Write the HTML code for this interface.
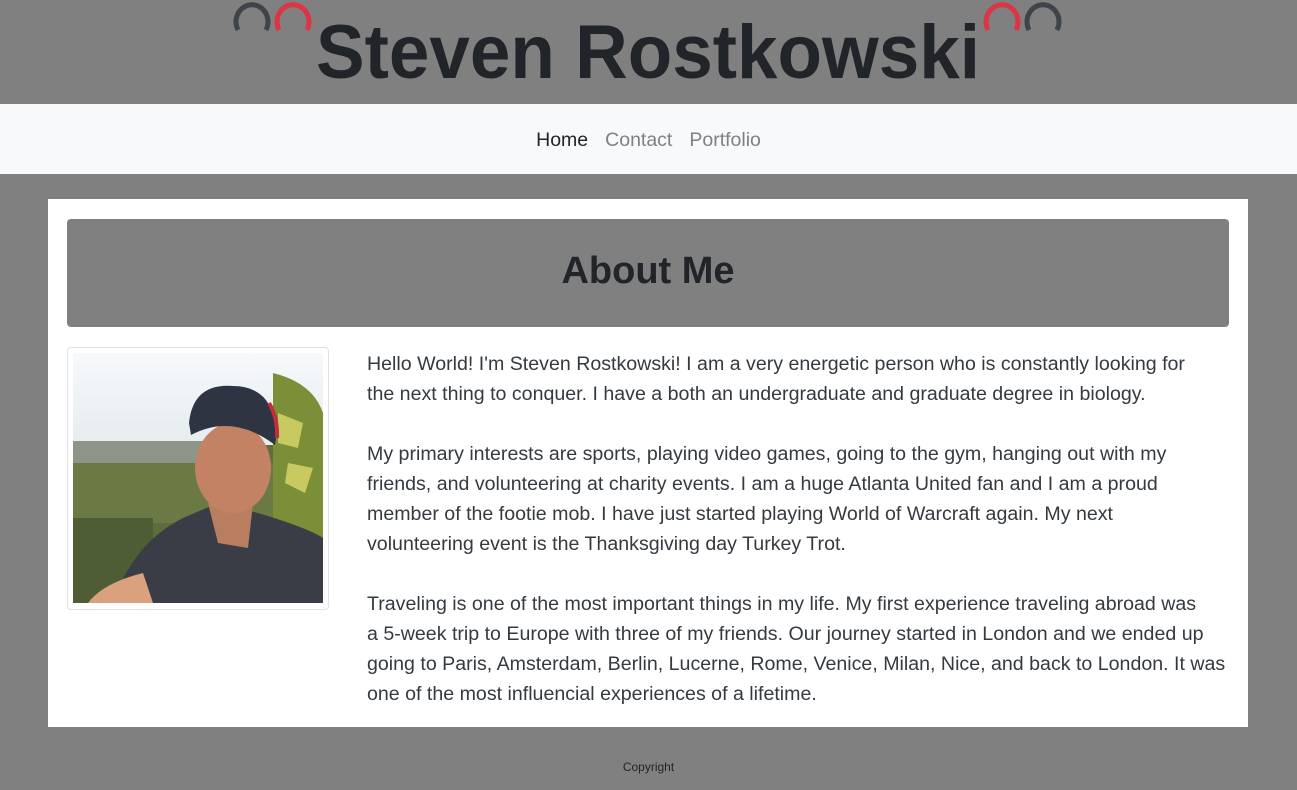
<!DOCTYPE html>
<html><head><meta charset="utf-8"><style>
*{margin:0;padding:0;box-sizing:border-box}
body{width:1297px;height:790px;background:#808080;font-family:"Liberation Sans",sans-serif;overflow:hidden;position:relative}
.hdr{position:absolute;left:0;top:0;width:1297px;height:104px}
.nav{position:absolute;top:104px;left:0;width:1297px;height:70px;background:#f8f9fa;text-align:center;font-size:19.5px;line-height:72px;color:#808080}
.nav span{margin:0 8.5px}
.main{position:absolute;left:48px;top:199px;width:1200px;height:528px;background:#fff}
.about{position:absolute;left:19px;top:20px;width:1162px;height:108px;background:#808080;border-radius:4px;text-align:center;font-size:38px;font-weight:bold;line-height:104px;color:#212529}
.pic{position:absolute;left:19px;top:148px;width:262px;height:263px;border:1px solid #dee2e6;border-radius:4px;background:#fff;padding:5px}
.txt{position:absolute;left:319px;top:150px;font-size:19.6px;line-height:30px;color:#343a40;white-space:nowrap}
.txt p{margin-bottom:30px}
.foot{position:absolute;top:760px;width:1297px;text-align:center;font-size:12px;color:#212529}
</style></head><body>
<svg class="hdr" width="1297" height="104">
<g fill="none" stroke-width="5">
<path d="M238 30 A16 17 0 1 1 266 30" stroke="#3f444a"/>
<path d="M279 30 A16 17 0 1 1 307 30" stroke="#dc3545"/>
<path d="M988 30 A16 17 0 1 1 1016 30" stroke="#dc3545"/>
<path d="M1029 30 A16 17 0 1 1 1057 30" stroke="#3f444a"/>
</g>
<text x="316" y="78" font-size="76" font-weight="bold" fill="#212529" textLength="664" lengthAdjust="spacingAndGlyphs" font-family="Liberation Sans">Steven Rostkowski</text>
</svg>
<div class="nav"><span style="color:#212529">Home</span><span>Contact</span><span>Portfolio</span></div>
<div class="main">
<div class="about">About Me</div>
<div class="pic"><svg width="250" height="250" viewBox="0 0 250 250">
<defs><linearGradient id="s" x1="0" y1="0" x2="0" y2="1"><stop offset="0" stop-color="#f7f9fb"/><stop offset="1" stop-color="#e6ecef"/></linearGradient></defs>
<rect width="250" height="250" fill="#5d6e3c"/>
<rect width="250" height="92" fill="url(#s)"/>
<rect y="88" width="130" height="22" fill="#8d9589"/>
<rect y="110" width="250" height="60" fill="#6b7a45"/>
<rect y="165" width="80" height="85" fill="#4f5d34"/>
<path d="M200 20 Q240 30 250 60 L250 200 L200 200 Z" fill="#7a8f38"/>
<path d="M205 60 l25 10 l-5 25 l-20 -5 z M215 110 l25 5 l-8 25 l-20 -10 z" fill="#c8c960"/>
<path d="M40 250 Q60 190 110 165 L145 150 L185 160 Q235 175 250 185 L250 250 Z" fill="#3a3d46"/>
<path d="M15 250 Q30 230 70 220 L80 250 Z" fill="#d9a27d"/>
<path d="M135 150 L180 150 L175 195 L145 190 Z" fill="#b97d5f"/>
<ellipse cx="160" cy="115" rx="38" ry="45" fill="#c38264"/>
<path d="M116 70 Q120 30 160 33 Q200 33 204 80 L202 92 Q160 60 118 82 Z" fill="#2f3442"/>
<path d="M196 50 Q205 65 204 85" stroke="#c0303a" stroke-width="4" fill="none"/>
</svg></div>
<div class="txt">
<p>Hello World! I'm Steven Rostkowski! I am a very energetic person who is constantly looking for<br>the next thing to conquer. I have a both an undergraduate and graduate degree in biology.</p>
<p>My primary interests are sports, playing video games, going to the gym, hanging out with my<br>friends, and volunteering at charity events. I am a huge Atlanta United fan and I am a proud<br>member of the footie mob. I have just started playing World of Warcraft again. My next<br>volunteering event is the Thanksgiving day Turkey Trot.</p>
<p>Traveling is one of the most important things in my life. My first experience traveling abroad was<br>a 5-week trip to Europe with three of my friends. Our journey started in London and we ended up<br>going to Paris, Amsterdam, Berlin, Lucerne, Rome, Venice, Milan, Nice, and back to London. It was<br>one of the most influencial experiences of a lifetime.</p>
</div>
</div>
<div class="foot">Copyright</div>
</body></html>
